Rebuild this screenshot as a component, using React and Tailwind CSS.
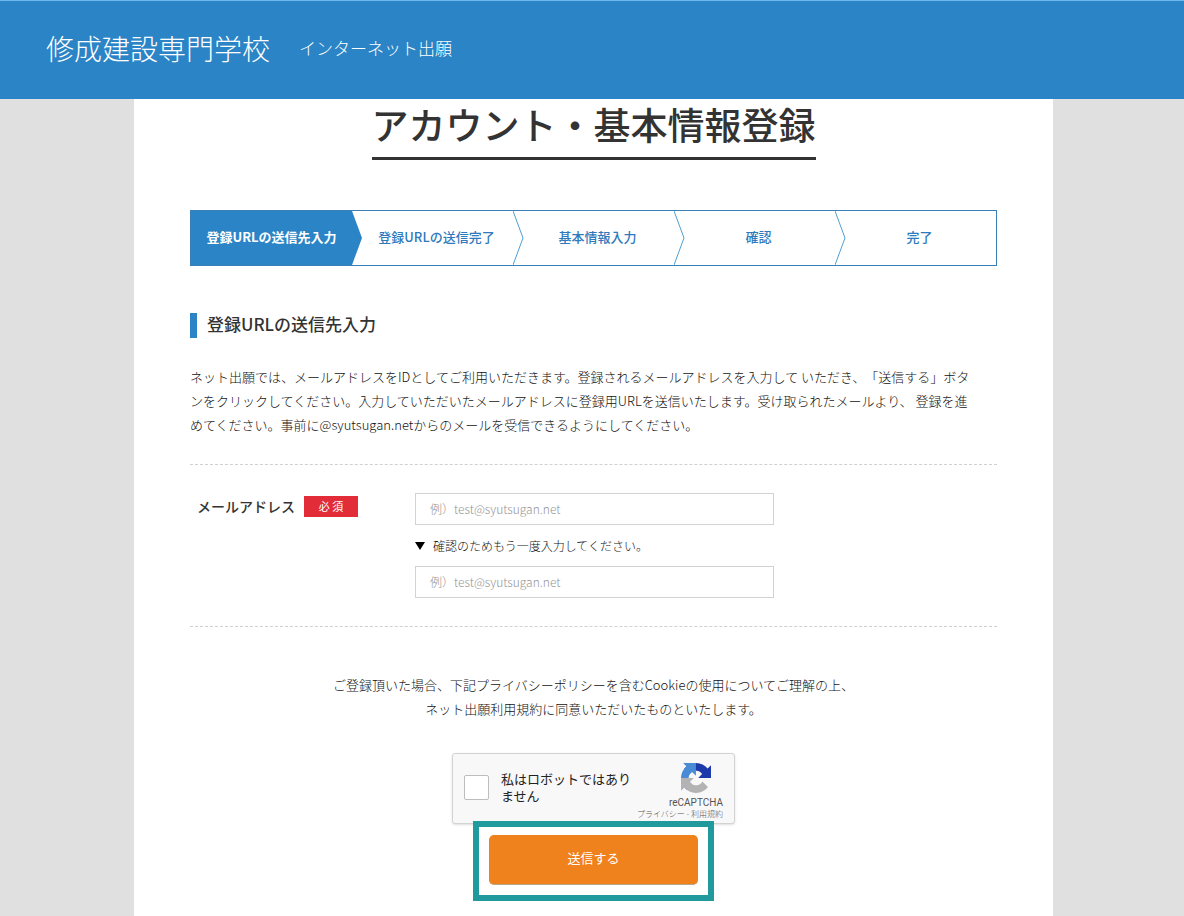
import React from 'react';

const steps = ['登録URLの送信先入力', '登録URLの送信完了', '基本情報入力', '確認', '完了'];

const Header = () => (
  <header className="flex items-center gap-[29px] h-[99px] pl-[46px] pb-1 bg-[#2b84c6] border-t border-[#6db7ee] text-white">
    <p className="text-[28px] leading-8 font-light">修成建設専門学校</p>
    <p className="text-[17px] leading-8 font-light">インターネット出願</p>
  </header>
);

const StepArrow = ({ filled }) => (
  <svg
    className="absolute left-full top-0 z-10 h-full w-[11px]"
    viewBox="0 0 11 54"
    preserveAspectRatio="none"
    aria-hidden="true"
  >
    {filled ? (
      <path d="M-1 0H0L10 27L0 54H-1Z" fill="#2b84c6" />
    ) : (
      <path d="M0 0L10 27L0 54" fill="none" stroke="#4f9fd2" strokeWidth="1" />
    )}
  </svg>
);

const Steps = ({ current }) => (
  <ol className="mt-[50px] grid grid-cols-5 h-14 border border-[#3a7fb5]">
    {steps.map((step, i) => (
      <li
        key={step}
        className={`relative flex items-center justify-center pb-0.5 text-[13px] ${
          i === current ? 'bg-[#2b84c6] text-white font-bold' : 'pl-2 text-[#2f79bd] font-medium'
        }`}
      >
        {step}
        {i < steps.length - 1 && <StepArrow filled={i === current} />}
      </li>
    ))}
  </ol>
);

const EmailInput = ({ id, label }) => (
  <input
    id={id}
    type="email"
    aria-label={label}
    placeholder="例）test@syutsugan.net"
    className="block w-full h-8 px-[14px] pb-0.5 border border-[#d3d3d3] bg-white text-[12px] text-[#333] placeholder:text-[#949494] outline-none"
  />
);

const RecaptchaLogo = () => (
  <svg className="w-[30px] h-[30px]" viewBox="0 0 64 64" aria-hidden="true">
    <path
      fill="#1c3aa9"
      d="M64 31.955l-.033-1.37V4.687l-7.16 7.16C50.948 4.674 42.033.093 32.05.093c-10.4 0-19.622 4.96-25.458 12.64l11.736 11.86a15.55 15.55 0 0 1 4.754-5.334c2.05-1.6 4.952-2.906 8.968-2.906.485 0 .86.057 1.135.163 4.976.393 9.288 3.14 11.828 7.124l-8.307 8.307L64 31.953"
    />
    <path
      fill="#4a8bd6"
      d="M31.862.094l-1.37.033H4.594l7.16 7.16C4.58 13.147 0 22.06 0 32.046c0 10.4 4.96 19.622 12.64 25.458L24.5 45.768a15.55 15.55 0 0 1-5.334-4.754c-1.6-2.05-2.906-4.952-2.906-8.968 0-.485.057-.86.163-1.135.393-4.976 3.14-9.288 7.124-11.828l8.307 8.307L31.86.095"
    />
    <path
      fill="#b3b3b3"
      d="M.001 32.045l.033 1.37v25.898l7.16-7.16c5.86 7.173 14.774 11.754 24.76 11.754 10.4 0 19.622-4.96 25.458-12.64l-11.736-11.86a15.55 15.55 0 0 1-4.754 5.334c-2.05 1.6-4.952 2.906-8.968 2.906-.485 0-.86-.057-1.135-.163-4.976-.393-9.288-3.14-11.828-7.124l8.307-8.307c-10.522.04-22.4.066-27.295-.005"
    />
  </svg>
);

const Recaptcha = () => (
  <div className="flex w-[283px] h-[71px] border border-[#d3d3d3] rounded-[3px] bg-[#f9f8f9] shadow-sm">
    <div className="flex items-center flex-1 gap-3 pl-[11px] pb-[3px]">
      <input
        id="robot"
        type="checkbox"
        className="appearance-none shrink-0 w-[25px] h-[25px] bg-white border border-[#bdbdbd] rounded-[2px]"
      />
      <label htmlFor="robot" className="text-[13px] leading-[17px] font-normal text-[#222]">
        私はロボットではあり
        <br />
        ません
      </label>
    </div>
    <div className="flex flex-col items-end pt-[9px] pr-[11px] text-[#555]">
      <div className="flex flex-col items-center">
        <RecaptchaLogo />
        <p className="mt-1 font-['Roboto'] text-[10px] leading-3 font-normal">reCAPTCHA</p>
      </div>
      <p className="text-[8px] leading-[10px] font-light whitespace-nowrap">
        <a href="#privacy">プライバシー</a> - <a href="#terms">利用規約</a>
      </p>
    </div>
  </div>
);

export default function App() {
  return (
    <div className="flex flex-col min-h-screen bg-[#e0e0e0] font-['Noto_Sans_CJK_JP',sans-serif] font-light text-[#333] [text-spacing-trim:space-all]">
      <Header />
      <div className="flex flex-1 pl-[134px] pr-[131px]">
        <main className="flex-1 px-14 pt-1 pb-3 bg-white">
          {/* Page title */}
          <div className="flex justify-center">
            <h1 className="pb-3 border-b-[3px] border-[#333] text-[37px] leading-[42px] font-medium">
              アカウント・基本情報登録
            </h1>
          </div>

          <Steps current={0} />

          <h2 className="mt-[47px] pl-[10px] pb-1 border-l-[7px] border-[#2b84c6] text-[17px] leading-[21px] font-medium">
            登録URLの送信先入力
          </h2>
          <p className="mt-[27px] text-[13px] leading-6 text-[#111]">
            ネット出願では、メールアドレスをIDとしてご利用いただきます。登録されるメールアドレスを入力して いただき、「送信する」ボタ
            <br />
            ンをクリックしてください。入力していただいたメールアドレスに登録用URLを送信いたします。受け取られたメールより、 登録を進
            <br />
            めてください。事前に@syutsugan.netからのメールを受信できるようにしてください。
          </p>

          <form onSubmit={(e) => e.preventDefault()}>
            {/* Email fields */}
            <div className="flex mt-[27px] py-7 border-y border-dashed border-[#d0d0d0]">
              <div className="flex items-start gap-[9px] w-[225px] pt-[3px] pl-[7px]">
                <label htmlFor="email" className="text-sm leading-[21px] font-medium">
                  メールアドレス
                </label>
                <span className="w-[54px] bg-[#e22c38] text-center text-[11px] leading-[21px] font-normal text-white">
                  必 須
                </span>
              </div>
              <div className="w-[359px]">
                <EmailInput id="email" label="メールアドレス" />
                <label htmlFor="email-confirm" className="flex items-center gap-2 text-[12px] leading-[41px] text-[#111]">
                  <svg className="w-[10px] h-2" viewBox="0 0 10 8" aria-hidden="true">
                    <path d="M0 0H10L5 8Z" fill="#000" />
                  </svg>
                  確認のためもう一度入力してください。
                </label>
                <EmailInput id="email-confirm" label="メールアドレス（確認）" />
              </div>
            </div>

            <p className="mt-[46px] text-center text-[13px] leading-6 text-[#111]">
              ご登録頂いた場合、下記プライバシーポリシーを含むCookieの使用についてご理解の上、
              <br />
              ネット出願利用規約に同意いただいたものといたします。
            </p>

            <div className="flex flex-col items-center mt-8">
              <Recaptcha />
              <div className="relative -mt-[3px] px-[10px] pt-2 pb-[10px] border-[6px] border-[#219a9e]">
                <button
                  type="submit"
                  className="block w-[209px] h-[50px] pb-1 rounded-[5px] bg-[#f0821e] border-b border-[#b9a58a] text-[13px] font-normal text-white"
                >
                  送信する
                </button>
              </div>
            </div>
          </form>
        </main>
      </div>
    </div>
  );
}
